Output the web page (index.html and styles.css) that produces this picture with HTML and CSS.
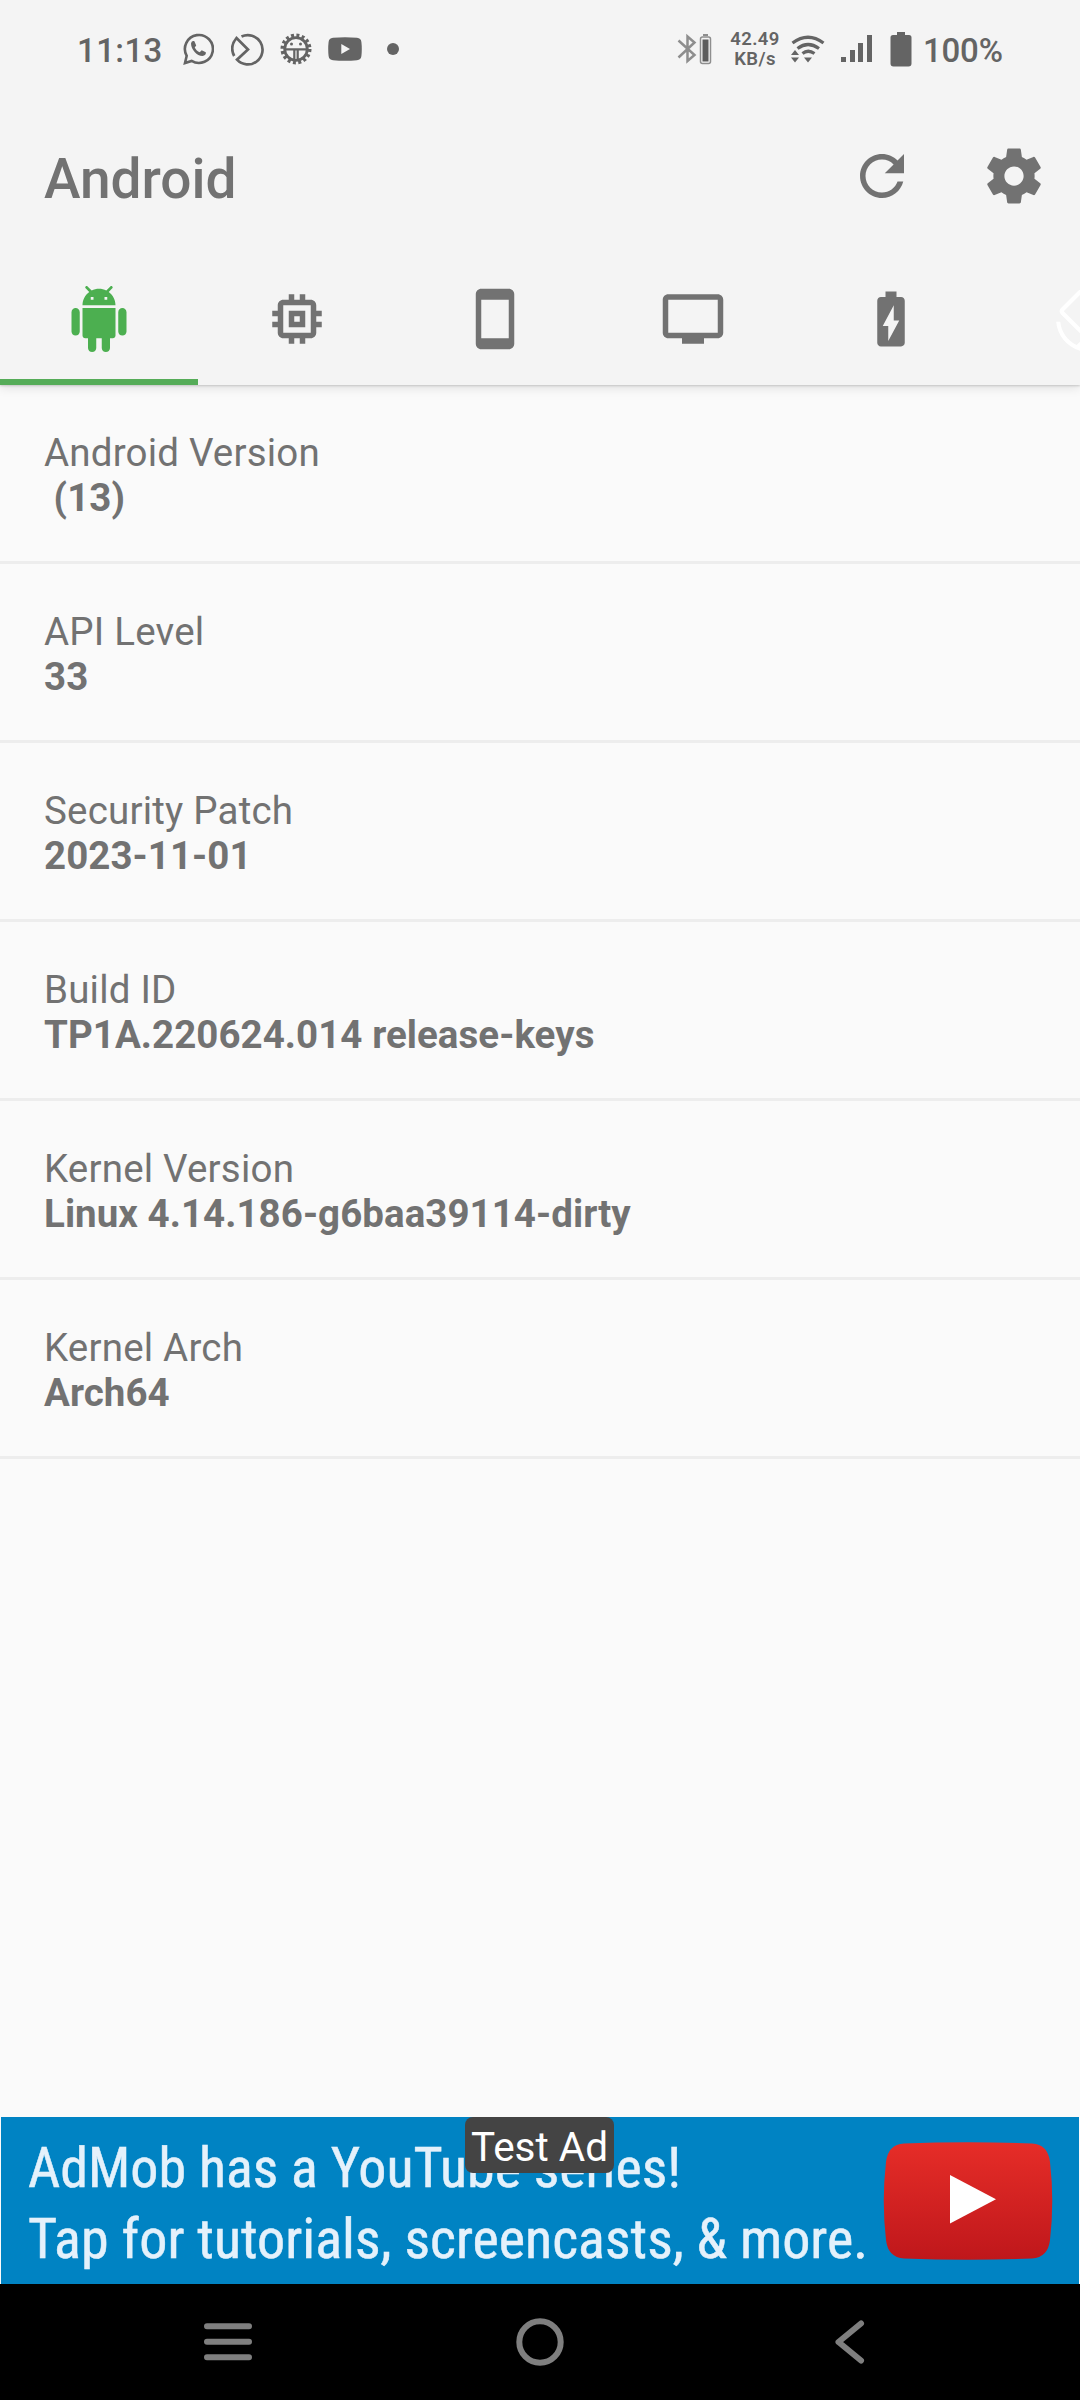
FILE: index.html
```html
<!DOCTYPE html>
<html lang="en">
<head>
<meta charset="utf-8">
<title>Android</title>
<link rel="stylesheet" href="styles.css">
</head>
<body>
<div class="screen">
  <header class="header">
    <div class="status">
      <div class="status-left">
        <span class="clock">11:13</span>
        <svg class="ic-whatsapp" width="31" height="32" viewBox="0 0 31 32" fill="none" stroke="currentColor"><path d="M2 30l1.700-7.200A14 14 0 1 1 8.600 27.900z" stroke-width="2.600"/><path d="M8 10.500c.6-2.500 2-3 3.400-2.200l1.800 4.100-1.500 2.100c1.200 2.300 2.800 3.800 5 4.800l2-2 4.100 2c.6 1.800-1 3.500-3.300 3.700C14 23 8 16.500 8 10.500z" fill="currentColor" stroke="none"/></svg>
        <svg class="ic-clock" width="33" height="33" viewBox="0 0 33 33" fill="none" stroke="currentColor" stroke-width="2.700"><path d="M10.500 3.500A14.700 14.700 0 1 1 6 26.700L17 16.500 5.500 5C.5 11 0 17 3.200 23"/></svg>
        <svg class="ic-gear" width="32" height="32" viewBox="0 0 32 32" fill="none" stroke="currentColor"><circle cx="16" cy="16" r="13.500" stroke-width="4" stroke-dasharray="2.900 2.402"/><circle cx="16" cy="16" r="11.300" stroke-width="2.800"/><path d="M5 16.300h22M14.300 17v10M17.700 17v10" stroke-width="2.200"/><circle cx="11.500" cy="11" r="1.500" fill="currentColor" stroke="none"/><circle cx="20.500" cy="11" r="1.500" fill="currentColor" stroke="none"/></svg>
        <svg class="ic-video" width="34" height="24" viewBox="0 0 34 24"><path fill="currentColor" fill-rule="evenodd" d="M5 .8Q17-.3 29 .8q4 .4 4.400 4.200.8 7 0 14-.4 3.800-4.400 4.200-12 1.100-24 0Q1 22.800.6 19-.2 12 .6 5 1 1.200 5 .8zM13.300 7v10l8.700-5z"/></svg>
        <span class="dot"></span>
      </div>
      <div class="status-right">
        <svg class="ic-bt" width="35" height="32" viewBox="0 0 35 32" fill="none"><path d="M1.500 7.500L17.500 22 10.500 28V3.500l7 6L1.500 24.500" stroke="#8e8e8e" stroke-width="2.500"/><rect x="23.500" y="4" width="10" height="26.500" rx="2" stroke="#8e8e8e" stroke-width="1.500"/><path d="M26 1h5v2h-5z" fill="#8e8e8e"/><path d="M25.500 6.500h6v22h-6z" fill="#5c5c5c"/></svg>
        <span class="speed"><span>42.49</span><span>KB/s</span></span>
        <svg class="ic-wifi" width="34" height="29" viewBox="0 0 34 29" fill="none" stroke="currentColor" stroke-width="3.200"><path d="M1.500 8Q17-3.500 32.500 8M6.500 13.500Q17 5.500 28 13.500M11.500 18.500Q17 14 23.500 18.500"/><path d="M0 20l4-5 4 5zM0 22.500h8l-4 5zM13 22.500h8l-4 5z" fill="currentColor" stroke="none"/></svg>
        <svg class="ic-signal" width="32" height="28" viewBox="0 0 32 28" fill="currentColor"><path d="M0 22h5v5H0zM9 15h5v12H9zM17 8h5v19h-5zM26 0h5v27h-5z"/></svg>
        <svg class="ic-batt" width="22" height="37" viewBox="0 0 22 37" fill="currentColor"><path d="M7 1h8v3h4q2.500 0 2.500 2.500v26q0 3-3 3h-15q-3 0-3-3v-26Q.5 4 3 4h4z"/></svg>
        <span class="percent">100%</span>
      </div>
    </div>
    <div class="toolbar">
      <h1 class="title">Android</h1>
      <svg class="icon" viewBox="0 0 24 24"><path d="M17.650 6.350C16.200 4.900 14.210 4 12 4c-4.420 0-7.990 3.580-7.990 8s3.570 8 7.990 8c3.730 0 6.840-2.550 7.730-6h-2.080c-.82 2.330-3.040 4-5.650 4-3.310 0-6-2.690-6-6s2.690-6 6-6c1.660 0 3.140.69 4.220 1.780L13 11h7V4l-2.350 2.350z"/></svg>
      <svg class="icon" viewBox="0 0 24 24"><path d="M19.430 12.980c.04-.32.070-.64.070-.98s-.03-.66-.07-.98l2.110-1.650c.19-.15.24-.42.120-.64l-2-3.460c-.12-.22-.39-.3-.61-.22l-2.490 1c-.52-.4-1.080-.73-1.690-.98l-.38-2.650C14.460 2.180 14.250 2 14 2h-4c-.25 0-.46.18-.49.420l-.38 2.650c-.61.25-1.170.59-1.690.98l-2.490-1c-.23-.09-.49 0-.61.220l-2 3.460c-.13.22-.07.49.120.640l2.110 1.650c-.04.32-.07.65-.07.980s.03.66.070.980l-2.110 1.650c-.19.15-.24.42-.12.640l2 3.460c.12.22.39.3.610.220l2.490-1c.52.4 1.080.73 1.690.980l.38 2.650c.03.24.24.42.490.420h4c.25 0 .46-.18.490-.42l.38-2.650c.61-.25 1.170-.59 1.690-.98l2.490 1c.23.09.49 0 .61-.22l2-3.460c.12-.22.070-.49-.12-.64l-2.110-1.650zM12 15.500c-1.930 0-3.500-1.570-3.500-3.500s1.570-3.500 3.500-3.500 3.500 1.570 3.500 3.500-1.570 3.500-3.500 3.500z"/></svg>
    </div>
    <nav class="tabs">
      <div class="tab active"><svg class="icon" viewBox="0 0 24 24"><path d="M6 18c0 .55.45 1 1 1h1v3.500c0 .83.67 1.500 1.500 1.500s1.500-.67 1.500-1.500V19h2v3.500c0 .83.67 1.500 1.500 1.500s1.500-.67 1.500-1.500V19h1c.55 0 1-.45 1-1V8H6v10zM3.500 8C2.670 8 2 8.670 2 9.500v7c0 .83.67 1.500 1.500 1.500S5 17.330 5 16.500v-7C5 8.670 4.330 8 3.500 8zm17 0c-.83 0-1.500.67-1.500 1.500v7c0 .83.67 1.500 1.500 1.500s1.500-.67 1.500-1.500v-7c0-.83-.67-1.500-1.500-1.500zm-4.970-5.840l1.300-1.300c.2-.2.2-.51 0-.71-.2-.2-.51-.2-.71 0l-1.480 1.480C13.850 1.230 12.950 1 12 1c-.96 0-1.860.23-2.660.63L7.850.15c-.2-.2-.51-.2-.71 0-.2.2-.2.51 0 .71l1.310 1.310C6.970 3.260 6 5.010 6 7h12c0-1.990-.97-3.750-2.470-4.840zM10 5H9V4h1v1zm5 0h-1V4h1v1z"/></svg></div>
      <div class="tab"><svg class="icon" viewBox="0 0 24 24"><path d="M15 9H9v6h6V9zm-2 4h-2v-2h2v2zm8-2V9h-2V7c0-1.100-.9-2-2-2h-2V3h-2v2h-2V3H9v2H7c-1.100 0-2 .9-2 2v2H3v2h2v2H3v2h2v2c0 1.100.9 2 2 2h2v2h2v-2h2v2h2v-2h2c1.100 0 2-.9 2-2v-2h2v-2h-2v-2h2zm-4 6H7V7h10v10z"/></svg></div>
      <div class="tab"><svg class="icon" viewBox="0 0 24 24"><path d="M17 1.010L7 1c-1.100 0-1.990.9-1.990 2v18c0 1.100.89 2 1.990 2h10c1.100 0 2-.9 2-2V3c0-1.100-.9-1.990-2-1.990zM17 19H7V5h10v14z"/></svg></div>
      <div class="tab"><svg class="icon" viewBox="0 0 24 24"><path d="M21 3H3c-1.110 0-2 .89-2 2v12c0 1.100.89 2 2 2h5v2h8v-2h5c1.100 0 1.990-.9 1.990-2L23 5c0-1.110-.9-2-2-2zm0 14H3V5h18v12z"/></svg></div>
      <div class="tab"><svg class="icon" viewBox="0 0 24 24"><path d="M15.670 4H14V2h-4v2H8.330C7.600 4 7 4.600 7 5.330v15.330C7 21.400 7.600 22 8.330 22h7.330c.74 0 1.340-.6 1.340-1.330V5.330C17 4.600 16.400 4 15.670 4zM11 20v-5.500H9L13 7v5.500h2L11 20z"/></svg></div>
      <div class="tab pale"><svg class="icon" viewBox="0 0 24 24"><path d="M16.480 2.520c3.270 1.550 5.610 4.720 5.970 8.480h1.500C23.440 4.840 18.290 0 12 0l-.66.03 3.810 3.810 1.330-1.320zm-6.250-.77c-.59-.59-1.540-.59-2.120 0L1.750 8.110c-.59.59-.59 1.540 0 2.120l12.020 12.020c.59.59 1.540.59 2.120 0l6.360-6.360c.59-.59.59-1.540 0-2.120L10.230 1.750zm4.600 19.440L2.810 9.170l6.360-6.360 12.020 12.020-6.360 6.360zm-7.310.29C4.250 19.940 1.910 16.760 1.550 13H.05C.56 19.160 5.710 24 12 24l.66-.03-3.810-3.810-1.330 1.320z"/></svg></div>
    </nav>
  </header>
  <main class="list">
    <div class="row"><span class="label">Android Version</span><span class="value"> (13)</span></div>
    <div class="row"><span class="label">API Level</span><span class="value">33</span></div>
    <div class="row"><span class="label">Security Patch</span><span class="value">2023-11-01</span></div>
    <div class="row"><span class="label">Build ID</span><span class="value">TP1A.220624.014 release-keys</span></div>
    <div class="row"><span class="label">Kernel Version</span><span class="value">Linux 4.14.186-g6baa39114-dirty</span></div>
    <div class="row"><span class="label">Kernel Arch</span><span class="value">Arch64</span></div>
  </main>
  <aside class="ad">
    <svg class="ad-art" width="1078" height="167" viewBox="1 2117 1078 167">
      <defs><linearGradient id="red" x1="0" y1="0" x2="0" y2="1"><stop offset="0" stop-color="#e62d28"/><stop offset="1" stop-color="#bf171b"/></linearGradient></defs>
      <g class="ad-text">
        <text x="28" y="2187" textLength="653" lengthAdjust="spacingAndGlyphs">AdMob has a YouTube series!</text>
        <text x="28" y="2257.500" textLength="840" lengthAdjust="spacingAndGlyphs">Tap for tutorials, screencasts, &amp; more.</text>
      </g>
      <path fill="url(#red)" d="M904 2143.500Q968 2141 1032 2143.500Q1048 2144.500 1050 2162Q1054.500 2201 1050 2240Q1048 2257.500 1032 2258.500Q968 2261 904 2258.500Q888 2257.500 886 2240Q881.500 2201 886 2162Q888 2144.500 904 2143.500z"/>
      <path fill="#fff" d="M950 2175v48.500l46-24.300z"/>
    </svg>
    <span class="badge">Test Ad</span>
  </aside>
  <footer class="navbar">
    <svg width="48" height="38" viewBox="0 0 48 38"><path d="M3 3.200h42M3 18.800h42M3 34.300h42"/></svg>
    <svg class="home" width="48" height="48" viewBox="0 0 48 48"><circle cx="24" cy="24" r="20.700"/></svg>
    <svg width="30" height="44" viewBox="0 0 30 44"><path d="M26 3.500L3.500 22 26 40.500"/></svg>
  </footer>
</div>
</body>
</html>
```
FILE: styles.css
```css
* { box-sizing: border-box; }
body { margin: 0; font-family: Roboto, "Noto Sans", sans-serif; background: #fafafa; color: #727272; }
svg { display: block; flex: none; }
.screen { width: 1080px; height: 2400px; display: flex; flex-direction: column; overflow: hidden; }

.header { height: 385px; flex: none; background: #f4f4f4; box-shadow: 0 1px 2px rgba(0,0,0,.16), 0 3px 10px rgba(0,0,0,.1); overflow: visible; }
.status { height: 98px; display: flex; justify-content: space-between; padding: 0 77px 0 77px; color: #646464; }
.status-left, .status-right { display: flex; align-items: center; }
.clock, .percent { font-size: 33px; line-height: 38px; margin-top: 3px; white-space: nowrap; font-weight: 500; }
.clock { width: 106px; letter-spacing: .4px; }
.ic-clock { margin-left: 17px; }
.ic-gear { margin-left: 16px; }
.ic-video { margin-left: 16px; }
.dot { width: 12px; height: 12px; border-radius: 50%; background: currentColor; margin-left: 25px; }
.speed { width: 60px; margin-left: 13px; display: flex; flex-direction: column; align-items: center; font-size: 18.500px; font-weight: 600; line-height: 20px; letter-spacing: .4px; }
.ic-wifi { margin-left: 6px; }
.ic-signal { margin-left: 16px; }
.ic-batt { margin-left: 17px; }
.percent { width: 80px; margin-left: 11px; letter-spacing: -.2px; }

.toolbar { height: 156px; display: flex; align-items: center; padding: 0 33px 0 44px; gap: 66px; }
.title { margin: 0 auto 0 0; font-size: 55px; line-height: 64px; font-weight: 500; padding-top: 5px; }
.icon { width: 66px; height: 66px; fill: currentColor; }
.tabs { display: flex; height: 131px; overflow: hidden; }
.tab { width: 198px; height: 131px; flex: none; padding-top: 32px; display: flex; justify-content: center; }
.tab.active { color: #4caf50; border-bottom: 6px solid #55ac58; }
.tab.pale { color: #fff; }

.list { flex: 1; }
.row { height: 179px; padding: 45px 44px 0; border-bottom: 3px solid #ededed; display: flex; flex-direction: column; font-size: 38.500px; line-height: 45px; white-space: pre; }
.label { letter-spacing: .2px; }
.value { font-weight: 700; letter-spacing: .05px; }

.ad { position: relative; height: 167px; flex: none; margin: 0 1px; background: #0083c3; display: flex; justify-content: center; align-items: flex-start; }
.ad-text { font-family: "Roboto Condensed", Roboto, sans-serif; font-size: 56px; fill: #e4f1fb; stroke: #e4f1fb; stroke-width: .5px; }
.badge { position: absolute; top: 0; left: 464px; width: 149px; height: 56px; border-radius: 8px; background: #444; color: #fff; font-size: 40.500px; line-height: 61px; text-align: center; white-space: nowrap; }

.navbar { height: 116px; flex: none; background: #000; display: flex; align-items: center; justify-content: space-between; padding: 0 215px 0 204px; }
.navbar svg { fill: none; stroke: #7f7f7f; stroke-width: 6; stroke-linecap: round; stroke-linejoin: round; }
.navbar .home { margin-right: 7px; }
```
